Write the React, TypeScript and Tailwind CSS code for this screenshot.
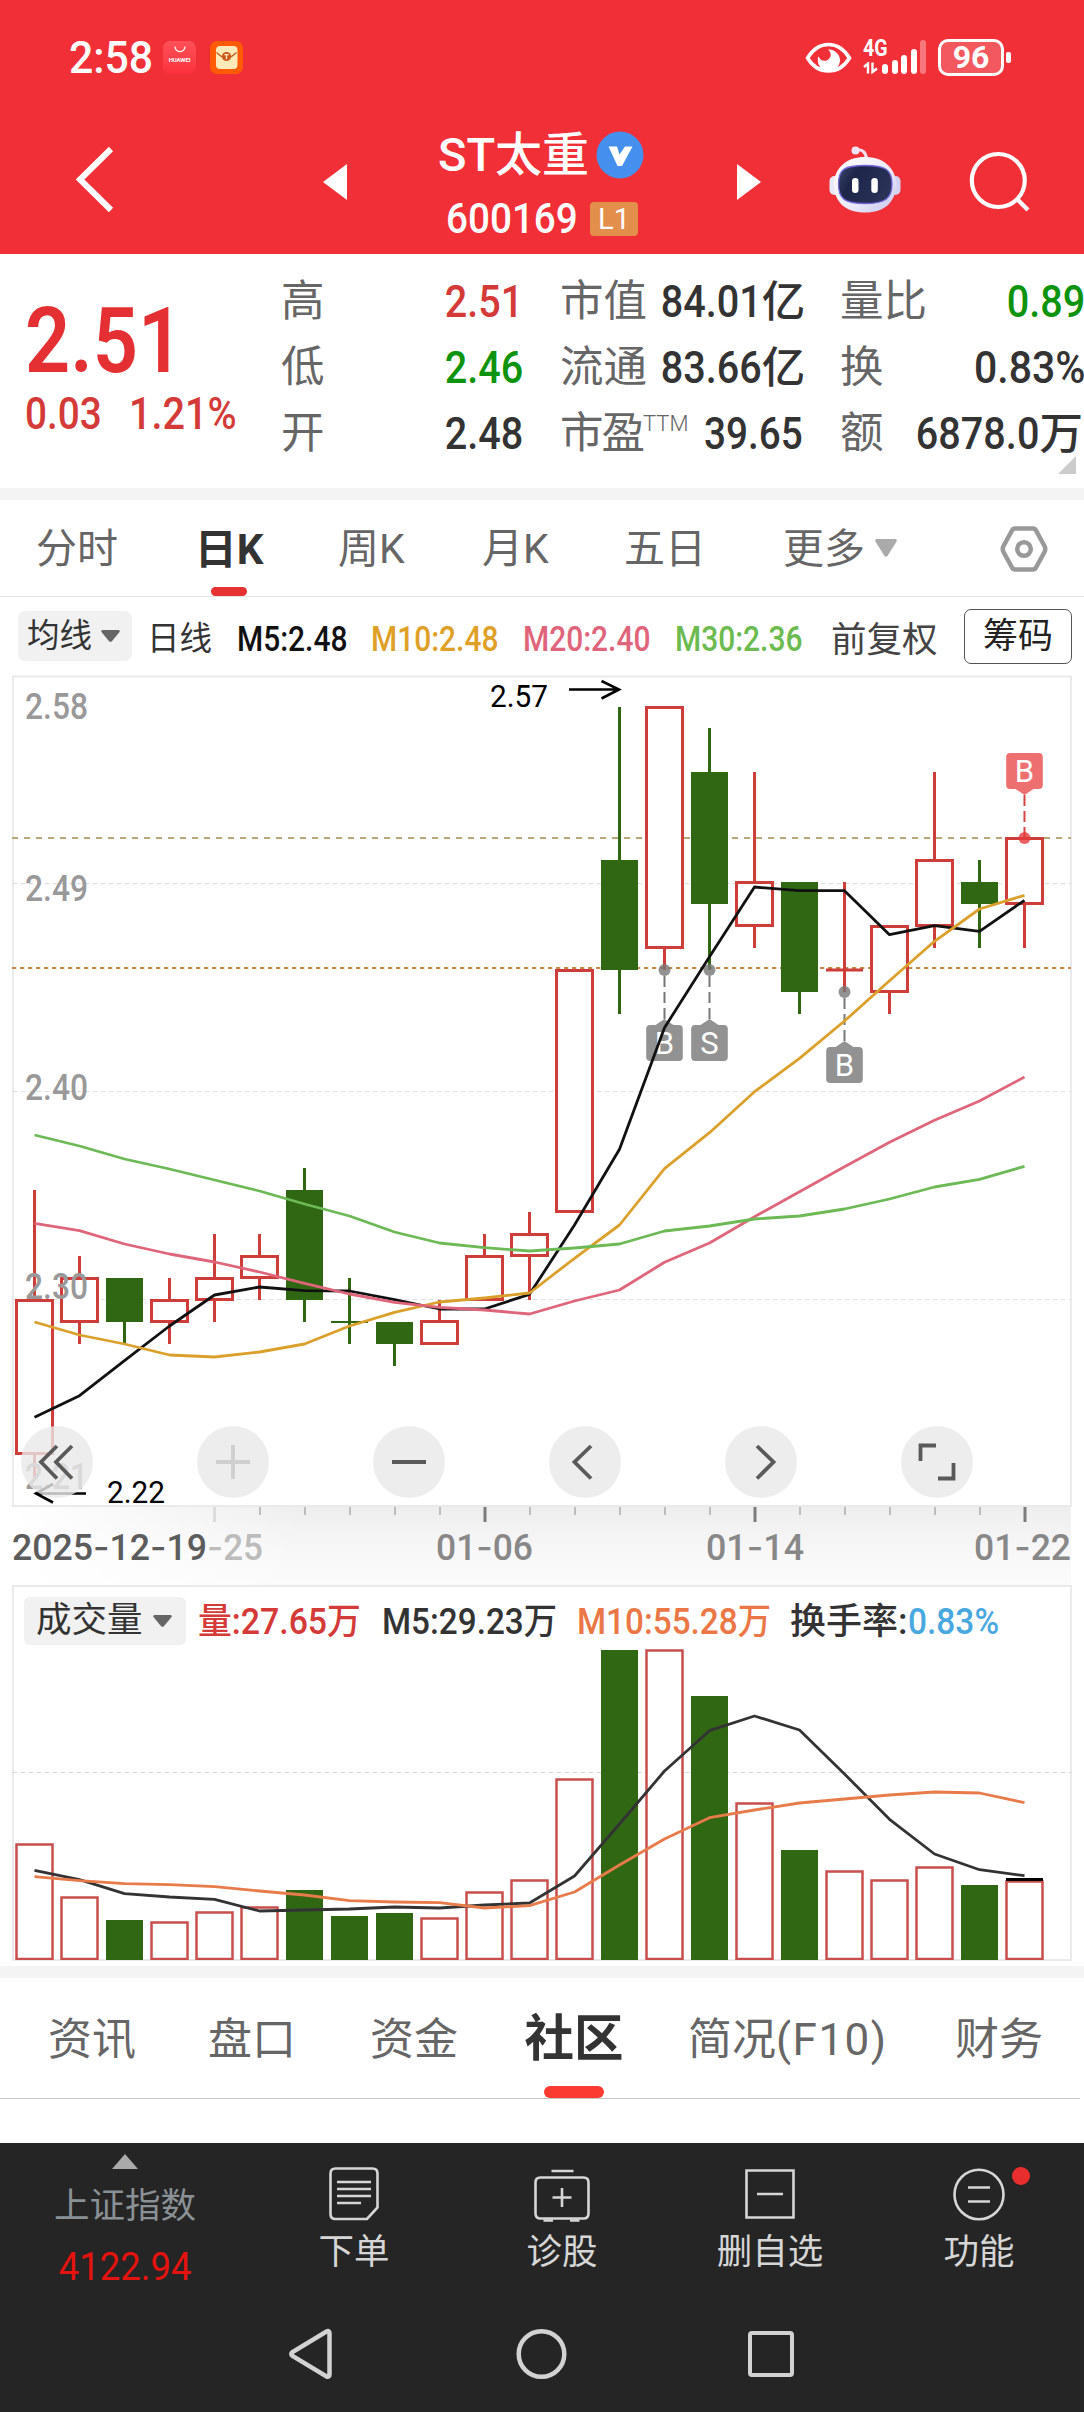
import type { ReactNode } from "react";

type Candle = { up: boolean; top: number; bottom: number; high: number; low: number };

const X0 = 34.5;
const STEP = 45;
const cx = (i: number) => X0 + STEP * i;

const c = (up: boolean, top: number, bottom: number, high: number, low: number): Candle => ({ up, top, bottom, high, low });

const CANDLES: Candle[] = [
  c(true, 1300.5, 1453.5, 1190, 1477),
  c(true, 1278.5, 1321.5, 1256, 1344),
  c(false, 1278, 1322, 1278, 1343),
  c(true, 1300.5, 1321.5, 1278, 1344),
  c(true, 1278.5, 1299.5, 1234, 1322),
  c(true, 1256.5, 1277.5, 1234, 1300),
  c(false, 1190, 1300, 1168, 1322),
  c(false, 1321, 1323, 1278, 1344),
  c(false, 1322, 1344, 1322, 1366),
  c(true, 1321.5, 1343.5, 1300, 1343),
  c(true, 1256.5, 1299.5, 1234, 1299),
  c(true, 1234.5, 1255.5, 1212, 1300),
  c(true, 970.5, 1211.5, 971, 1211),
  c(false, 860, 970, 707, 1014),
  c(true, 707.5, 947.5, 708, 970),
  c(false, 772, 904, 728, 970),
  c(true, 882.5, 925.5, 772, 948),
  c(false, 882, 992, 882, 1014),
  c(true, 970, 970, 882, 992),
  c(true, 926.5, 991.5, 927, 1014),
  c(true, 860.5, 925.5, 772, 948),
  c(false, 882, 904, 860, 948),
  c(true, 838.5, 903.5, 839, 948),
];

const MA5 = [1417.3, 1395.7, 1360.7, 1326, 1295, 1287, 1290.7, 1291, 1299.7, 1309, 1309, 1294.3, 1225, 1149.3, 1027.7, 956.7, 887, 890.7, 890.7, 934.7, 925.7, 931.3, 900.3];
const MA10 = [1322, 1335, 1344, 1355, 1357, 1352, 1344, 1326, 1312.3, 1302, 1298, 1293, 1258.3, 1225, 1168.7, 1132.7, 1091.7, 1058.3, 1021, 980.7, 941.3, 909, 895.3];
const MA20 = [1223.3, 1230.7, 1244, 1254, 1262, 1272, 1283.3, 1294, 1302.3, 1307.3, 1310, 1314, 1301, 1290, 1262.3, 1243, 1216.7, 1191.7, 1166.7, 1142.3, 1120.3, 1101, 1077];
const MA30 = [1135, 1146, 1159, 1169, 1180, 1191, 1204, 1216, 1232, 1243, 1247.7, 1251, 1248, 1244, 1231, 1226, 1219, 1216, 1209, 1199, 1187, 1179.3, 1166.3];

const VOLUMES = [1844.5, 1897.5, 1920, 1922.5, 1912.5, 1907.5, 1890, 1916, 1913, 1918.5, 1892.5, 1880.5, 1779.5, 1650, 1650.5, 1696, 1803.5, 1850, 1871.5, 1880.5, 1867.5, 1885, 1881.5];
const VMA5 = [1870.3, 1879.7, 1893.7, 1897, 1899.3, 1911, 1910, 1909, 1907, 1908, 1905, 1903, 1876, 1824, 1771, 1730.7, 1716, 1730, 1774, 1819.3, 1854, 1869.7, 1875.7];
const VMA10 = [1876.7, 1880.7, 1883.7, 1884.7, 1886.7, 1891, 1895, 1900.7, 1902, 1902.7, 1908, 1905.7, 1892, 1865, 1839, 1817.7, 1810, 1803, 1799, 1795, 1792, 1793, 1802.7];

const points = (ys: number[]) => ys.map((y, i) => `${cx(i)},${y}`).join(" ");

const RED = "#cf3d3b";
const GREEN = "#306713";

function StatusBar() {
  return (
    <div className="flex h-[114px] items-center text-white">
      <span className="ml-[69px] w-[94px] text-[45px] font-medium leading-none">
        <span className="inline-block origin-left scale-x-[0.95]">2:58</span>
      </span>
      <div className="flex h-[33px] w-[33px] flex-col items-center rounded-[7px] bg-linear-to-b from-[#ff5058] to-[#fb303c]">
        <svg className="mt-[5px] h-[7px] w-[12px]" viewBox="0 0 12 7" fill="none" stroke="#fff" strokeWidth="1.2">
          <path d="M1 0.5a5 5.2 0 0 0 10 0" />
        </svg>
        <span className="mt-[4px] text-[6px] font-bold leading-none tracking-tight">HUAWEI</span>
      </div>
      <svg className="ml-[14px] h-[33px] w-[33px]" viewBox="0 0 33 33">
        <rect width="33" height="33" rx="7" fill="#ff5a06" />
        <rect x="6" y="5" width="21.5" height="23" rx="4" fill="#fdeab8" />
        <path d="M6.500 11.500 11.500 15.500h10l5-4" fill="none" stroke="#b9601c" strokeWidth="1.300" />
        <circle cx="16.500" cy="15.500" r="4.600" fill="#c8581a" />
        <path d="M14.300 13.700h4.400M16.500 13.700v4.500" stroke="#fdeab8" strokeWidth="1.300" />
      </svg>
      <svg className="ml-[562px] h-[33px] w-[47px]" viewBox="0 0 47 33">
        <path d="M2.500 17C8 8 15 3.500 23.500 3.500S39 8 44.500 17C39 26 32 30 23.500 30S8 26 2.500 17Z" fill="none" stroke="#fff" strokeWidth="3.500" />
        <path d="M25 8.500C31 9.500 35 14 35 19c0 6.500-5 11-11.500 11S12.500 25 12.800 18c0-1 .3-2 .7-2.500 1.500 3.500 4.500 5 8 4C26 18 27.500 12 23 8.600q1-.2 2-.1Z" fill="#fff" />
      </svg>
      <div className="ml-[11px] flex h-[34px] w-[18px] flex-col justify-between">
        <span className="origin-left scale-x-[0.85] text-[23px] font-bold leading-[17px]">4G</span>
        <svg className="h-[12px] w-[16px]" viewBox="0 0 16 12" fill="none" stroke="#fff" strokeWidth="2.400">
          <path d="M1 5 5 1.500V11.500M9.500 .5V10L14 6.500" />
        </svg>
      </div>
      <div className="ml-[1px] flex h-[34px] items-end gap-[3.500px]">
        <span className="h-[10px] w-[6px] rounded-full bg-white" />
        <span className="h-[14px] w-[6px] rounded-full bg-white" />
        <span className="h-[19px] w-[6px] rounded-full bg-white" />
        <span className="h-[25px] w-[6px] rounded-full bg-white" />
        <span className="h-[34px] w-[6px] rounded-full bg-white/35" />
      </div>
      <div className="ml-[12px] flex h-[37px] w-[66px] items-center justify-center rounded-[10px] border-[3px] border-white bg-white/20 text-[32px] font-bold leading-none">
        96
      </div>
      <span className="ml-[2px] h-[11px] w-[5px] rounded-[2px] bg-white" />
    </div>
  );
}

function NavBar() {
  return (
    <div className="flex h-[140px] text-white">
      <svg className="ml-[74px] mt-[32px] h-[68px] w-[42px] shrink-0" viewBox="0 0 42 68" fill="none" stroke="#fff" strokeWidth="6">
        <path d="M37 3 6 33.500 37 64" />
      </svg>
      <svg className="ml-[207px] mt-[50px] h-[36px] w-[24px] shrink-0" viewBox="0 0 24 36">
        <path d="M0 18 24 0v36Z" fill="#fff" />
      </svg>
      <div className="ml-[70px] w-[260px] shrink-0">
        <div className="flex items-center pl-[21px] pt-[16px]">
          <span className="w-[158px] whitespace-nowrap text-[47px] font-medium leading-[50px]">ST太重</span>
          <svg className="h-[48px] w-[48px]" viewBox="0 0 48 48">
            <circle cx="24" cy="24" r="23.500" fill="#458fee" />
            <path d="M12.500 15.500h8.500l2.500 8 5.500-8h7.500L26 35h-4.500Z" fill="#fff" />
          </svg>
        </div>
        <div className="flex items-center pl-[29px] pt-[21px]">
          <span className="w-[144px] text-[42px] font-medium leading-[36px]">
            <span className="inline-block origin-left scale-x-[0.92]">600169</span>
          </span>
          <span className="flex h-[34px] w-[48px] items-center justify-center rounded-[4px] bg-[#e38e4b] text-[29px] leading-none">L1</span>
        </div>
      </div>
      <svg className="ml-[60px] mt-[50px] h-[36px] w-[24px] shrink-0" viewBox="0 0 24 36">
        <path d="M24 18 0 0v36Z" fill="#fff" />
      </svg>
      <svg className="ml-[68px] mt-[32px] h-[68px] w-[73px] shrink-0" viewBox="0 0 73 68">
        <defs>
          <linearGradient id="shell" x1="0" y1="0" x2="1" y2="1">
            <stop offset="0" stopColor="#ffffff" />
            <stop offset="0.600" stopColor="#eae9fa" />
            <stop offset="1" stopColor="#c4c3ea" />
          </linearGradient>
          <linearGradient id="visor" x1="0" y1="0" x2="1" y2="0.400">
            <stop offset="0" stopColor="#3a4668" />
            <stop offset="0.350" stopColor="#1d2549" />
            <stop offset="1" stopColor="#2a3258" />
          </linearGradient>
        </defs>
        <path d="M27 4c6-1 10 2 10.500 9" fill="none" stroke="#f3dff0" strokeWidth="3" />
        <circle cx="26.500" cy="4.500" r="4" fill="#efe4f6" />
        <rect x="0.500" y="30" width="10" height="19" rx="5" fill="#e9e8f7" />
        <rect x="61.500" y="30" width="10" height="19" rx="5" fill="#d4d2f0" />
        <path d="M36 11C54 11 66 21 67.500 38 66.500 57 55 66.500 36 66.500S5.500 57 4.500 38C6 21 18 11 36 11Z" fill="url(#shell)" />
        <path d="M36 19.500c20 0 27 4 27 18.500S56 57.500 36 57.500 9.500 53 9.500 38 16 19.500 36 19.500Z" fill="url(#visor)" stroke="#7165d8" strokeWidth="1.300" />
        <rect x="23" y="32" width="6.500" height="15" rx="3.200" fill="#fff" />
        <rect x="42.300" y="32" width="6.500" height="15" rx="3.200" fill="#fff" />
      </svg>
      <svg className="ml-[66px] mt-[36px] h-[64px] w-[64px] shrink-0" viewBox="0 0 64 64" fill="none" stroke="#fff" strokeWidth="4.200">
        <circle cx="30.300" cy="30.500" r="26.500" />
        <path d="M49 49 60 60" />
      </svg>
    </div>
  );
}

function Stat({ label, children, width, tone }: { label: ReactNode; children: ReactNode; width: string; tone: string }) {
  return (
    <div className={`flex h-[66px] items-center justify-between whitespace-nowrap text-[43.500px] leading-none ${width}`}>
      <span className="text-[#666]">{label}</span>
      <span className={`font-medium ${tone}`}>{children}</span>
    </div>
  );
}

function Digits({ children }: { children: ReactNode }) {
  return <span className="inline-block origin-right scale-x-[0.88] text-[45px]">{children}</span>;
}

function QuotePanel() {
  return (
    <div className="relative flex h-[234px] overflow-hidden bg-white">
      <div className="w-[281px] shrink-0 pl-[25px] pt-[47px] font-medium text-[#e53033]">
        <div className="h-[94px] text-[90px] font-semibold leading-[82px]">
          <span className="inline-block origin-left scale-x-[0.88]">2.51</span>
        </div>
        <div className="flex text-[45px] leading-[38px] text-[#d43a38]">
          <span className="w-[104px]"><span className="inline-block origin-left scale-x-[0.86]">0.03</span></span>
          <span><span className="inline-block origin-left scale-x-[0.88]">1.21%</span></span>
        </div>
      </div>
      <div className="w-[279px] shrink-0 pt-[15px]">
        <Stat label="高" width="w-[242px]" tone="text-[#d43a38]"><Digits>2.51</Digits></Stat>
        <Stat label="低" width="w-[242px]" tone="text-[#0d930d]"><Digits>2.46</Digits></Stat>
        <Stat label="开" width="w-[242px]" tone="text-[#333]"><Digits>2.48</Digits></Stat>
      </div>
      <div className="w-[280px] shrink-0 pt-[15px]">
        <Stat label="市值" width="w-[244px]" tone="text-[#333]"><Digits>84.01</Digits>亿</Stat>
        <Stat label="流通" width="w-[244px]" tone="text-[#333]"><Digits>83.66</Digits>亿</Stat>
        <Stat
          label={<><span className="tracking-[-2px]">市盈</span><sup className="relative -top-[17px] align-baseline text-[22px] font-light">TTM</sup></>}
          width="w-[243px]"
          tone="text-[#333]"
        >
          <span className="inline-block origin-right scale-x-[0.86] text-[45px]">39.65</span>
        </Stat>
      </div>
      <div className="w-[244px] shrink-0 pt-[15px]">
        <Stat label="量比" width="w-[245px]" tone="text-[#0d930d]"><Digits>0.89</Digits></Stat>
        <Stat label="换" width="w-[245px]" tone="text-[#333]">
          <span className="inline-block origin-right scale-x-[0.91] text-[45px]">0.83%</span>
        </Stat>
        <Stat label="额" width="w-[243px]" tone="text-[#333]"><Digits>6878.0</Digits>万</Stat>
      </div>
      <svg className="absolute bottom-[14px] right-[8px] h-[18px] w-[18px]" viewBox="0 0 18 18">
        <path d="M18 0v18H0Z" fill="#ccc" />
      </svg>
    </div>
  );
}

function DownTriangle({ className }: { className: string }) {
  return (
    <svg className={className} viewBox="0 0 20 14" preserveAspectRatio="none">
      <path d="M1.500 0h17q2 .5 1 2.200L11.500 13q-1.500 1.500-3 0L.5 2.200Q-.5 .5 1.500 0Z" fill="currentColor" />
    </svg>
  );
}

function PeriodTabs() {
  return (
    <div className="flex h-[97px] items-stretch border-b border-[#e4e4e4] text-[41px] leading-none text-[#666] whitespace-nowrap">
      <div className="w-[158px] pl-[36px] pt-[29px]">分时</div>
      <div className="flex w-[142px] flex-col items-center justify-between pt-[29px] font-bold text-[#333]">
        <span className="text-[42px] leading-[41px]">日K</span>
        <span className="h-[9px] w-[36px] rounded-full bg-[#e63232]" />
      </div>
      <div className="w-[144px] pl-[38px] pt-[29px]">周K</div>
      <div className="w-[144px] pl-[38px] pt-[29px]">月K</div>
      <div className="w-[160px] pl-[36px] pt-[29px]">五日</div>
      <div className="flex w-[252px] pl-[35px] pt-[29px]">
        更多
        <DownTriangle className="ml-[10px] mt-[10px] h-[18px] w-[22px] text-[#aaa]" />
      </div>
      <svg className="mt-[25px] h-[48px] w-[48px]" viewBox="0 0 48 48" fill="none" stroke="#999" strokeWidth="4.500">
        <path d="M15 3.500h18q2 0 3 2l8.500 15.500q1.500 3 0 6L36 42.500q-1 2-3 2H15q-2 0-3-2L3.500 27q-1.500-3 0-6L12 5.500q1-2 3-2Z" />
        <circle cx="24" cy="24" r="6.800" />
      </svg>
    </div>
  );
}

function Squeeze({ children }: { children: ReactNode }) {
  return <span className="inline-block origin-left scale-x-[0.855]">{children}</span>;
}

function IndicatorRow() {
  return (
    <div className="flex h-[78px] items-start pt-[12px] text-[35px] leading-none whitespace-nowrap">
      <div className="ml-[18px] mt-[2px] flex h-[50px] w-[114px] items-center rounded-[7px] bg-[#f1f1f1] pl-[9px] text-[32.500px] text-[#333]">
        均线
        <DownTriangle className="ml-[9px] h-[12px] w-[19px] text-[#666]" />
      </div>
      <span className="ml-[15px] mt-[14px] w-[90px] text-[32.500px] text-[#333]">日线</span>
      <span className="mt-[13px] w-[134px] font-medium text-[#111]"><Squeeze>M5:2.48</Squeeze></span>
      <span className="mt-[13px] w-[152px] font-medium text-[#dfa028]"><Squeeze>M10:2.48</Squeeze></span>
      <span className="mt-[13px] w-[152px] font-medium text-[#e0647a]"><Squeeze>M20:2.40</Squeeze></span>
      <span className="mt-[13px] w-[156px] font-medium text-[#6cbb50]"><Squeeze>M30:2.36</Squeeze></span>
      <span className="mt-[14px] w-[133px] text-[35.500px] text-[#444]">前复权</span>
      <span className="flex h-[55px] w-[108px] items-center justify-center rounded-[7px] border-[1.500px] border-[#555] text-[35px] text-[#222]">筹码</span>
    </div>
  );
}

function Marker({ i, dot, y, text, hot }: { i: number; dot: number; y: number; text: string; hot?: boolean }) {
  const x = cx(i);
  const fill = hot ? "#ee6f6f" : "#929292";
  return (
    <g>
      {hot ? <path d={`M${x - 9} ${y + 36}h18l-9 6Z`} fill={fill} /> : <path d={`M${x - 9} ${y}h18l-9-6Z`} fill={fill} />}
      <path
        d={hot ? `M${x} ${y + 42}V${dot}` : `M${x} ${dot + 6}V${y - 5}`}
        stroke={hot ? "#d64545" : "#777"}
        strokeWidth="2"
        strokeDasharray="11 5"
      />
      <circle cx={x} cy={dot} r="6" fill={hot ? "#e33a3a" : "#777"} opacity="0.800" />
      <rect x={x - 18.300} y={y} width="36.600" height="36" rx="4" fill={fill} />
      <text x={x} y={y + 29} textAnchor="middle" fontSize="31" fill="#fff">{text}</text>
    </g>
  );
}

function Line({ ys, color }: { ys: number[]; color: string }) {
  return <polyline points={points(ys)} fill="none" stroke={color} strokeWidth="2.800" strokeLinejoin="round" />;
}

function RoundButton({ children }: { children: ReactNode }) {
  return (
    <button className="flex h-[72px] w-[72px] items-center justify-center rounded-full bg-[#e9e9e9]/80">
      <svg className="h-[72px] w-[72px]" viewBox="0 0 72 72" fill="none" stroke="#5a5a5a" strokeWidth="3.800">
        {children}
      </svg>
    </button>
  );
}

const PRICE_LABELS: [string, number][] = [["2.58", 719], ["2.49", 901], ["2.40", 1100], ["2.30", 1299], ["2.21", 1489]];

function PriceChart() {
  return (
    <div className="relative h-[832px]">
      <svg className="block h-[832px] w-[1084px] overflow-visible" viewBox="0 675 1084 832">
        <rect x="13" y="676.500" width="1058" height="829.500" fill="#fff" stroke="#eaeaea" strokeWidth="2" />
        <g stroke="#dedede" strokeWidth="1.200" strokeDasharray="4.300 3.700">
          <path d="M13 883.700H1071" />
          <path d="M13 1091.500H1071" />
          <path d="M13 1299.500H1071" />
        </g>
        <path d="M12 838H1071" stroke="#b9a878" strokeWidth="2" strokeDasharray="6 6" />
        <path d="M12 968H1071" stroke="#c58a4c" strokeWidth="2" strokeDasharray="4.300 3.700" />
        {CANDLES.map((k, i) => (
          <g key={i} stroke={k.up ? RED : GREEN}>
            <path d={`M${cx(i)} ${k.high}V${k.top}M${cx(i)} ${k.bottom}V${k.low}`} strokeWidth="3" />
            {k.top === k.bottom ? (
              <path d={`M${cx(i) - 18.500} ${k.top}h37`} strokeWidth="3" />
            ) : k.up ? (
              <rect x={cx(i) - 18} y={k.top} width="36" height={k.bottom - k.top} fill="#fff" strokeWidth="3" />
            ) : (
              <rect x={cx(i) - 18.500} y={k.top} width="37" height={k.bottom - k.top} fill={GREEN} stroke="none" />
            )}
          </g>
        ))}
        {PRICE_LABELS.map(([t, y]) => (
          <text key={t} x="25" y={y} fontSize="36" fontWeight="500" fill="#999" textLength="63" lengthAdjust="spacingAndGlyphs">{t}</text>
        ))}
        <Marker i={14} dot={970} y={1025} text="B" />
        <Marker i={15} dot={970} y={1025} text="S" />
        <Marker i={18} dot={992} y={1047} text="B" />
        <Marker i={22} dot={838} y={753} text="B" hot />
        <Line ys={MA5} color="#111" />
        <Line ys={MA10} color="#dba02c" />
        <Line ys={MA20} color="#df667a" />
        <Line ys={MA30} color="#6cb956" />
        <text x="490" y="707" fontSize="32" fill="#000" textLength="58" lengthAdjust="spacingAndGlyphs">2.57</text>
        <text x="107" y="1503" fontSize="32" fill="#000" textLength="58" lengthAdjust="spacingAndGlyphs">2.22</text>
        <g fill="none" stroke="#000" strokeWidth="2.600">
          <path d="M569 689.500H619M601.500 681 619 689.500 601.500 698.500" />
          <path d="M86 1493.500H36M53 1484 36 1493.500 53 1502.500" />
        </g>
      </svg>
      <div className="absolute bottom-[9px] left-[21px] flex gap-[104px]">
        <RoundButton><path d="M36 20 20 36 36 52.500M51 20 35 36 51 52.500" /></RoundButton>
        <RoundButton><path d="M19 36H53M36 19V53" stroke="#cfcfcf" /></RoundButton>
        <RoundButton><path d="M19 36H53" /></RoundButton>
        <RoundButton><path d="M42 20 25.500 36 42 52.500" /></RoundButton>
        <RoundButton><path d="M32 20 48.500 36 32 52.500" /></RoundButton>
        <RoundButton><path d="M19.500 35V19.500H35M52.500 37V52.500H37" /></RoundButton>
      </div>
    </div>
  );
}

const AXIS_LABELS: [string, number, number, string][] = [
  ["-25", 207, 56, "#bcbcbc"],
  ["01-06", 436, 97, "#888"],
  ["01-14", 706, 98, "#888"],
  ["01-22", 974, 97, "#888"],
  ["2025-12-19", 12, 195, "#5c5c5c"],
];

function TimeAxis() {
  return (
    <svg className="block h-[78px] w-[1084px]" viewBox="0 1507 1084 78">
      <defs>
        <linearGradient id="axis" x1="0" y1="0" x2="0" y2="1">
          <stop offset="0" stopColor="#eeeeee" />
          <stop offset="0.600" stopColor="#f8f8f8" />
          <stop offset="1" stopColor="#fbfbfb" />
        </linearGradient>
        <linearGradient id="axisFade" x1="0" y1="0" x2="1" y2="0">
          <stop offset="0" stopColor="#fff" />
          <stop offset="1" stopColor="#fff" stopOpacity="0" />
        </linearGradient>
      </defs>
      <rect x="13" y="1507" width="1058" height="78" fill="url(#axis)" />
      <rect x="13" y="1507" width="290" height="78" fill="url(#axisFade)" />
      {CANDLES.map((_, i) => {
        const major = i === 10 || i === 16 || i === 22;
        if (i < 4) return null;
        if (i === 4) return <path key={i} d={`M${cx(i)} 1507v15`} stroke="#dcdcdc" strokeWidth="3" />;
        return <path key={i} d={`M${cx(i) + 0.500} 1507v${major ? 15 : 8}`} stroke={major ? "#7c7c7c" : "#bdbdbd"} strokeWidth={major ? 3 : 2} />;
      })}
      {AXIS_LABELS.map(([t, x, w, fill]) => (
        <text key={t} x={x} y="1560" fontSize="36" fontWeight="500" fill={fill} textLength={w} lengthAdjust="spacingAndGlyphs">
          {t.split(/(-)/).map((part, n) =>
            part === "-" ? <tspan key={n} fontFamily="Inter">-</tspan> : <tspan key={n}>{part}</tspan>,
          )}
        </text>
      ))}
    </svg>
  );
}

function Reading({ children }: { children: ReactNode }) {
  return <span className="inline-block origin-left scale-x-[0.865]">{children}</span>;
}

function VolumePanel() {
  return (
    <div className="ml-[12px] h-[381px] w-[1060px]">
      <div className="h-[376px] border-2 border-[#eaeaea] bg-white">
        <div className="flex h-[60px] items-start pt-[10px] text-[36px] leading-none whitespace-nowrap">
          <div className="ml-[10px] flex h-[48px] w-[162px] items-center rounded-[6px] bg-[#f1f1f1] pl-[12px] text-[35.500px] text-[#333]">
            成交量
            <DownTriangle className="ml-[10px] h-[12px] w-[19px] text-[#666]" />
          </div>
          <span className="ml-[12px] mt-[7px] w-[184px] font-medium text-[#d43a38]"><span className="inline-block origin-left scale-x-[0.94]">量:27.65万</span></span>
          <span className="mt-[7px] w-[195px] font-medium text-[#333]"><span className="inline-block origin-left scale-x-[0.925]">M5:29.23万</span></span>
          <span className="mt-[7px] w-[213px] font-medium text-[#ea7745]"><span className="inline-block origin-left scale-x-[0.925]">M10:55.28万</span></span>
          <span className="mt-[7px] w-[118px] font-medium text-[#333]">换手率:</span>
          <span className="mt-[7px] font-medium text-[#4aa8e0]"><span className="inline-block origin-left scale-x-[0.93]">0.83%</span></span>
        </div>
        <svg className="-ml-[2px] block h-[313px] w-[1060px]" viewBox="12 1647 1060 313">
          <path d="M13 1772.500H1071" stroke="#d6d6d6" strokeWidth="1.200" strokeDasharray="4.300 3.700" />
          {VOLUMES.map((y, i) =>
            CANDLES[i].up ? (
              <rect key={i} x={cx(i) - 18} y={y} width="36" height={1959 - y} fill="#fff" stroke="#c94f4d" strokeWidth="2.500" />
            ) : (
              <rect key={i} x={cx(i) - 18.500} y={y} width="37" height={1960 - y} fill={GREEN} />
            ),
          )}
          <path d="M1006 1879.500h37" stroke="#000" strokeWidth="3" />
          <Line ys={VMA5} color="#333" />
          <Line ys={VMA10} color="#e87b4a" />
        </svg>
      </div>
    </div>
  );
}

function InfoTabs() {
  return (
    <div className="h-[165px] bg-white">
      <div className="flex h-[121px] w-[1080px] border-b-[1.500px] border-[#c6c6c6] text-[44px] leading-none text-[#666] whitespace-nowrap">
        <span className="w-[161px] pl-[48px] pt-[40px]">资讯</span>
        <span className="w-[161px] pl-[47px] pt-[40px]">盘口</span>
        <span className="w-[160px] pl-[48px] pt-[40px]">资金</span>
        <div className="flex w-[184px] flex-col items-center justify-between pt-[37px] text-[49.500px] font-bold text-[#333]">
          <span>社区</span>
          <span className="h-[12px] w-[60px] rounded-full bg-[#fb3a32]" />
        </div>
        <span className="w-[242px] pl-[22px] pt-[40px]">简况<span className="tracking-[1.500px]">(F10)</span></span>
        <span className="pl-[47px] pt-[40px]">财务</span>
      </div>
    </div>
  );
}

function Action({ label, width, children }: { label: string; width: string; children: ReactNode }) {
  return (
    <div className={`flex flex-col items-center pt-[22px] ${width}`}>
      <svg className="h-[58px] w-[60px]" viewBox="0 0 60 58" fill="none" stroke="#d6d6d6" strokeWidth="2.600">
        {children}
      </svg>
      <span className="mt-[12px] text-[35.500px] leading-none text-[#d6d6d6]">{label}</span>
    </div>
  );
}

function BottomBar() {
  return (
    <div className="h-[269px] bg-[#252525]">
      <div className="flex h-[165px]">
        <div className="flex w-[250px] flex-col items-center pt-[11px]">
          <svg className="h-[15px] w-[26px]" viewBox="0 0 26 15"><path d="M13 0 26 15H0Z" fill="#aaa" /></svg>
          <span className="mt-[20px] text-[35.500px] leading-none text-[#899196]">上证指数</span>
          <span className="mt-[23px] text-[38px] leading-none text-[#e5130f]"><span className="inline-block scale-x-[0.96]">4122.94</span></span>
        </div>
        <Action label="下单" width="w-[208px]">
          <path d="M11.500 3.500h37q5 0 5 5v34L43 54H11.500q-5 0-5-5V8.500q0-5 5-5Z" />
          <path d="M13 17H47M13 24H47M13 31H47M13 38H37" />
        </Action>
        <Action label="诊股" width="w-[208px]">
          <path d="M8.500 12.500h43q5 0 5 5v31q0 5-5 5h-43q-5 0-5-5v-31q0-5 5-5ZM19.500 6H41.500M30 23V42M20.500 32.500H39.500" />
          <path d="M11.500 55.500H21M38 55.500h9.500" />
        </Action>
        <Action label="删自选" width="w-[208px]">
          <path d="M6.500 5.500h47v47h-47ZM17 29H43" />
        </Action>
        <div className="relative">
          <Action label="功能" width="w-[210px]">
            <ellipse cx="30" cy="29.500" rx="24.500" ry="24.800" />
            <path d="M19 22.500H41M19 36.500H41" />
          </Action>
          <span className="absolute right-[54px] top-[24px] h-[18px] w-[18px] rounded-full bg-[#e92e2e]" />
        </div>
      </div>
      <div className="flex items-center">
        <svg className="ml-[286px] mt-[18px] h-[56px] w-[50px]" viewBox="0 0 50 56" fill="none" stroke="#d2d2d2" strokeWidth="4.500">
          <path d="M40.500 5.500q3-1.500 3 2v41q0 3-3 2L6.500 30q-2.500-2 0-4Z" />
        </svg>
        <svg className="ml-[177px] mt-[18px] h-[56px] w-[56px]" viewBox="0 0 56 56" fill="none" stroke="#d2d2d2" strokeWidth="4.500">
          <circle cx="28.500" cy="28" r="22.800" />
        </svg>
        <span className="ml-[179px] mt-[18px] h-[46px] w-[46px] rounded-[4px] border-[4.500px] border-[#d2d2d2]" />
      </div>
    </div>
  );
}

export default function App() {
  return (
    <main className="h-[2412px] w-[1084px] overflow-hidden bg-white font-[Roboto,'Noto_Sans_CJK_SC',sans-serif]">
      <header className="h-[254px] bg-[#f12f37]">
        <StatusBar />
        <NavBar />
      </header>
      <QuotePanel />
      <div className="h-[12px] bg-[#f4f4f4]" />
      <PeriodTabs />
      <IndicatorRow />
      <PriceChart />
      <TimeAxis />
      <VolumePanel />
      <div className="h-[12px] bg-[#f4f4f4]" />
      <InfoTabs />
      <BottomBar />
    </main>
  );
}
